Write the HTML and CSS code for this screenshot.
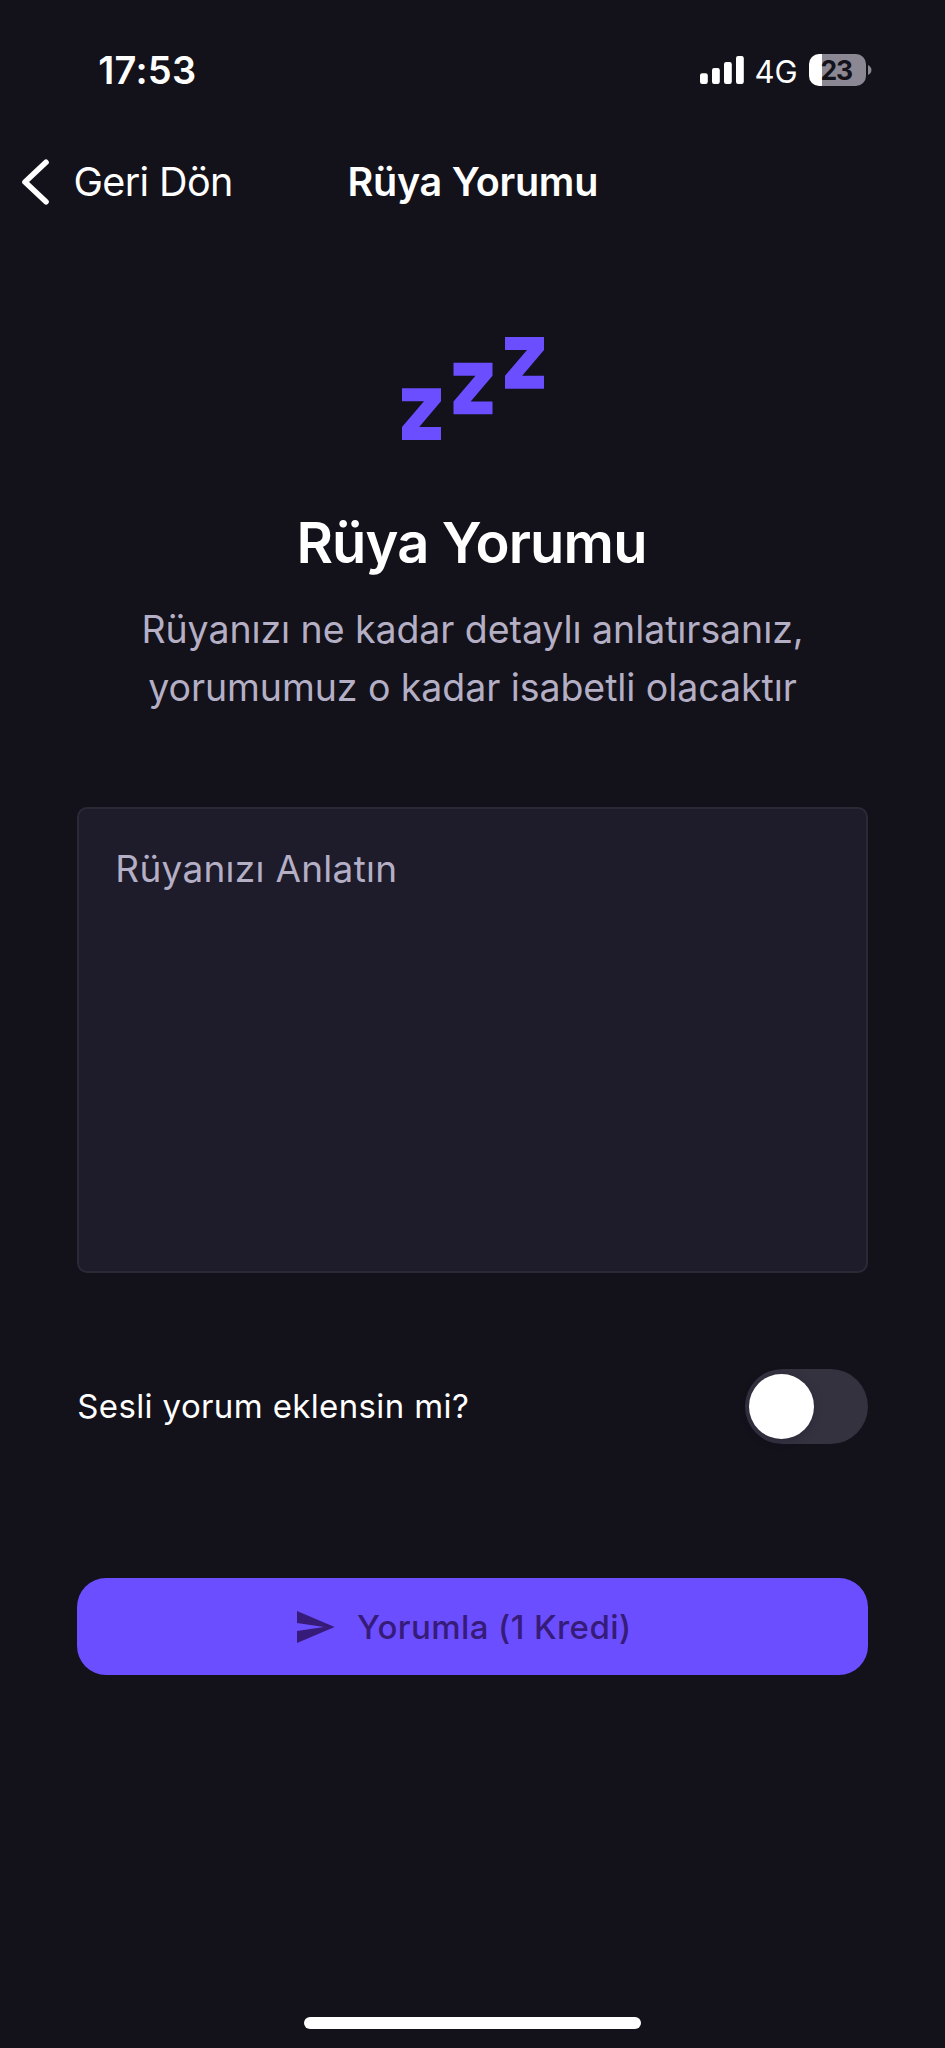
FILE: index.html
```html
<!DOCTYPE html>
<html lang="tr">
<head>
<meta charset="utf-8">
<title>Rüya Yorumu</title>
<link rel="stylesheet" href="styles.css">
</head>
<body>
<div class="screen">
  <div class="status-bar">
    <span class="clock">17:53</span>
    <div class="indicators">
      <svg class="signal" width="44" height="28" viewBox="0 0 44 28" fill="#fff">
        <rect x="0" y="17.3" width="7.8" height="10.7" rx="2.2"/>
        <rect x="12" y="12" width="7.8" height="16" rx="2.2"/>
        <rect x="24" y="6" width="7.8" height="22" rx="2.2"/>
        <rect x="36" y="0" width="7.8" height="28" rx="2.2"/>
      </svg>
      <span class="network">4G</span>
      <div class="battery"><span class="battery-level">23</span></div>
      <svg class="battery-cap" width="4" height="10" viewBox="0 0 4 10"><path d="M0 0C4.6 2 4.6 8 0 10Z" fill="#8b8894"/></svg>
    </div>
  </div>

  <header class="nav">
    <a class="back">
      <svg width="30" height="48" viewBox="0 0 30 48" fill="none" stroke="#fff" stroke-width="5.6" stroke-linecap="round" stroke-linejoin="round"><path d="M25 4.3L4 24L25 43.8"/></svg>
      <span class="back-label">Geri Dön</span>
    </a>
    <span class="nav-title">Rüya Yorumu</span>
  </header>

  <main class="content">
    <svg class="sleep-icon" width="142" height="103" viewBox="0 0 142 103" fill="#6b4eff">
      <path d="M0 51.3H39V64.3L17.2 90H39V103H0V90L22 64.3H0Z"/>
      <path d="M51.5 25.7H90.5V38.7L68.7 64.4H90.5V77.2H51.5V64.4L73.5 38.7H51.5Z"/>
      <path d="M103 0H142V13L120.2 38.7H142V51.7H103V38.7L125 13H103Z"/>
    </svg>
    <h1 class="heading">Rüya Yorumu</h1>
    <p class="subtitle">Rüyanızı ne kadar detaylı anlatırsanız,<br>yorumumuz o kadar isabetli olacaktır</p>

    <div class="dream-input"><span class="placeholder">Rüyanızı Anlatın</span></div>

    <div class="voice-row">
      <span class="voice-label">Sesli yorum eklensin mi?</span>
      <span class="toggle"><span class="knob"></span></span>
    </div>

    <div class="submit">
      <svg width="38" height="32" viewBox="0 0 38 32" fill="#361b78"><path d="M0 0L37.6 16L0 32V20L27 16L0 12Z"/></svg>
      <span class="submit-label">Yorumla (1 Kredi)</span>
    </div>
  </main>

  <div class="home-indicator"></div>
</div>
</body>
</html>
```
FILE: styles.css
```css
* { box-sizing: border-box; }

body {
  margin: 0;
  background: #13111a;
  color: #fff;
  font-family: Inter, "Open Sans", sans-serif;
}

svg { display: block; flex: none; }

.screen {
  display: flex;
  flex-direction: column;
  width: 945px;
  height: 2048px;
  padding-bottom: 19px;
  overflow: hidden;
  white-space: nowrap;
}

.status-bar {
  display: flex;
  align-items: center;
  justify-content: space-between;
  height: 140px;
  padding: 0 73px 0 98.3px;
}

.clock {
  font-size: 38px;
  font-weight: 600;
  line-height: 40px;
  letter-spacing: 0.25px;
}

.indicators { display: flex; align-items: center; }

.network {
  margin: 3px 0 0 10.3px;
  width: 54px;
  font-size: 31px;
  line-height: 36px;
}

.battery {
  display: flex;
  align-items: center;
  width: 57px;
  height: 32px;
  padding-left: 12px;
  border-radius: 10px;
  background: linear-gradient(to right, #fff 13px, #8b8894 13px);
}

.battery-level {
  color: #13111a;
  font-size: 26.5px;
  font-weight: 700;
  line-height: 32px;
  letter-spacing: -1.2px;
}

.battery-cap { margin-left: 2.5px; }

.nav {
  display: grid;
  grid-template-columns: 326.3px auto;
  align-items: center;
  height: 84px;
  padding-left: 21.2px;
  font-size: 39.5px;
  line-height: 48px;
}

.back { display: flex; align-items: center; gap: 22.3px; }
.back-label { letter-spacing: -0.62px; }
.nav-title { font-weight: 600; letter-spacing: -0.26px; }

.content {
  display: flex;
  flex-direction: column;
  padding: 113px 77.3px 0;
}

.sleep-icon { align-self: center; }

.heading {
  margin: 69px 2px 0 0;
  text-align: center;
  font-size: 56px;
  font-weight: 600;
  line-height: 68px;
  letter-spacing: -0.83px;
}

.subtitle {
  margin: 24px 0 0;
  color: #b4afc5;
  text-align: center;
  font-size: 37.5px;
  line-height: 57.5px;
  letter-spacing: -0.07px;
}

.dream-input {
  height: 465.5px;
  margin-top: 91px;
  padding: 30px 36px;
  border: 2px solid #2c2937;
  border-radius: 10px;
  background: #1e1b2b;
}

.placeholder {
  display: block;
  color: #b4afc5;
  font-size: 37px;
  line-height: 60px;
  letter-spacing: 0.27px;
}

.voice-row {
  display: flex;
  align-items: center;
  justify-content: space-between;
  margin-top: 96.5px;
}

.voice-label {
  font-size: 33px;
  line-height: 48px;
  letter-spacing: 0.37px;
}

.toggle {
  display: flex;
  align-items: center;
  width: 123px;
  height: 74.5px;
  padding-left: 4.7px;
  border-radius: 38px;
  background: #353240;
}

.knob {
  width: 65px;
  height: 65px;
  border-radius: 50%;
  background: #fff;
  box-shadow: 0 2px 10px rgba(19, 17, 40, 0.3);
}

.submit {
  display: flex;
  align-items: center;
  gap: 22px;
  height: 97px;
  margin-top: 134.5px;
  padding-left: 219.7px;
  border-radius: 29px;
  background: #6b4eff;
}

.submit-label {
  color: #361b78;
  font-size: 33px;
  font-weight: 500;
  line-height: 48px;
  letter-spacing: 0.41px;
}

.home-indicator {
  align-self: center;
  width: 337px;
  height: 12.5px;
  margin-top: auto;
  border-radius: 7px;
  background: #fff;
}
```
